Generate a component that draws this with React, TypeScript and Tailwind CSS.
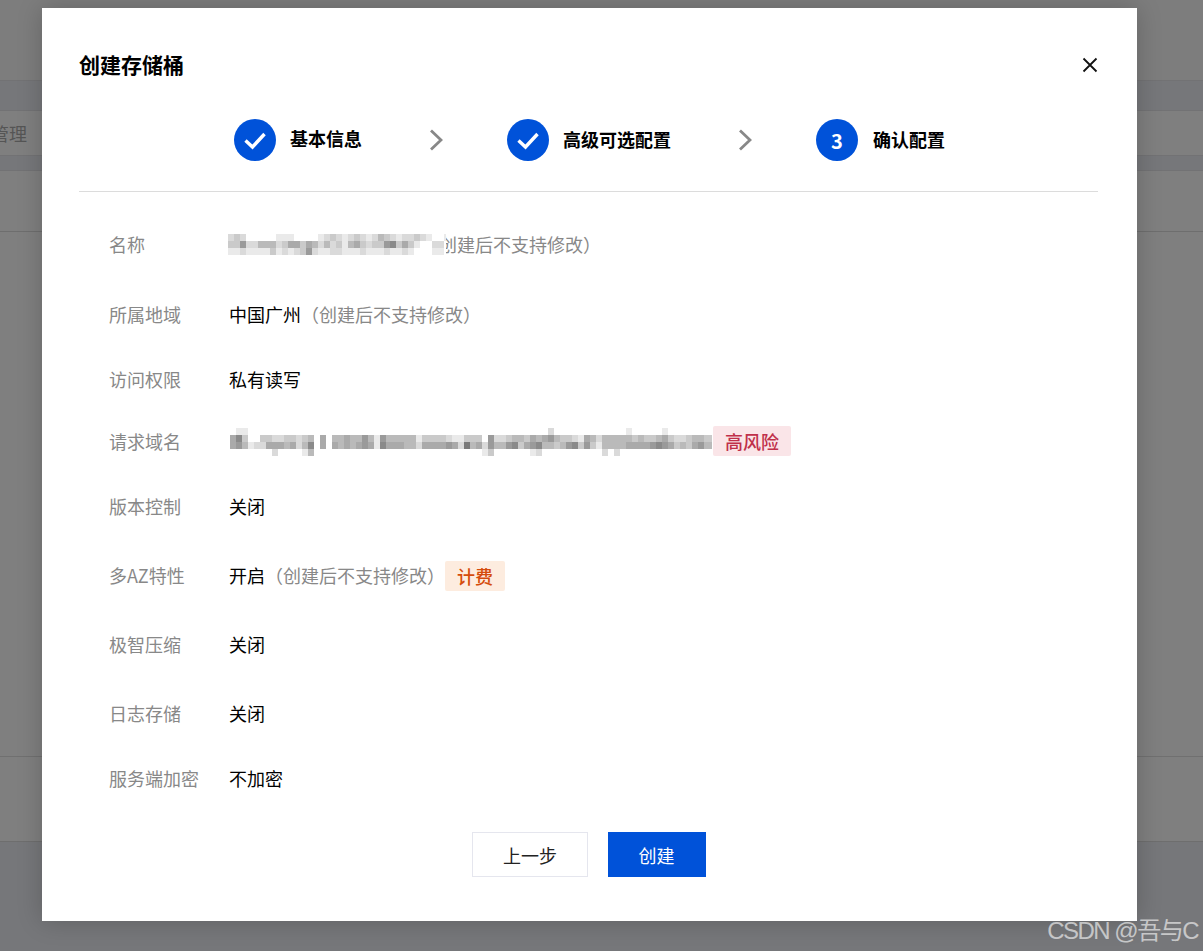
import React from "react";

const NAME_ROWS = [
  "232000001110000123212321243212232100110",
  "336224442355354242314532336735310022000",
  "112111131212362112211121112112100011000",
];

const DOMAIN_ROWS = [
  "011000000000000000000000000000000000000000000000000002000000000000100000100000000",
  "573003322332340504454464164444413333211333062234435456433215424444434334532234433",
  "564122555452470505454565175554425555652845264467356744346736314444555567653435644",
  "000000020000140000000000000000000000000000130000001200000000002020000000000000000",
];

function Mosaic({ rows, size, width, height }: { rows: string[]; size: number; width: number; height: number }) {
  const rowH = height / rows.length;
  return (
    <svg width={width} height={height} className="relative z-10 block shrink-0 bg-white">
      <g style={{ filter: "blur(0.5px)" }}>
        {rows.map((row, r) =>
          row.split("").map((c, i) => {
            const v = parseInt(c, 16);
            if (!v) return null;
            const g = 250 - v * 16;
            return <rect key={`${r}-${i}`} x={i * size} y={r * rowH} width={size} height={rowH} fill={`rgb(${g},${g},${g})`} />;
          })
        )}
      </g>
    </svg>
  );
}

function Check() {
  return (
    <span className="flex h-[42px] w-[42px] items-center justify-center rounded-full bg-[#0052d9]">
      <svg width="24" height="24" viewBox="0 0 24 24" fill="none" stroke="#fff" strokeWidth="3.4">
        <path d="M2.5 12.5 L9.5 19 L21.5 6" />
      </svg>
    </span>
  );
}

function Chevron() {
  return (
    <svg width="14" height="22" viewBox="0 0 14 22" fill="none" stroke="#888" strokeWidth="2.8" className="shrink-0">
      <path d="M2 1.5 L12 11 L2 20.5" />
    </svg>
  );
}

function Row({ label, className, children }: { label: string; className: string; children: React.ReactNode }) {
  return (
    <div className={`flex h-[30px] items-center ${className}`}>
      <div className="w-[120px] shrink-0 text-[#888]">{label}</div>
      <div className="flex items-center text-black">{children}</div>
    </div>
  );
}

const Hint = () => <span className="text-[#888]">（创建后不支持修改）</span>;

export default function App() {
  return (
    <div
      className="relative flex h-[951px] w-[1203px] flex-col overflow-hidden bg-[#7f7f7f] text-[18px]"
      style={{ fontFamily: '"Noto Sans CJK SC", sans-serif' }}
    >
      <div className="h-[80px] shrink-0 bg-[#7d7d7d]" />
      <div className="h-[31px] shrink-0 border-y border-[#727274] bg-[#76777a]" />
      <div className="flex h-[44px] shrink-0 items-center text-[18px] text-[#555]">
        <span className="ml-[-9px]">管理</span>
      </div>
      <div className="h-[16px] shrink-0 border-y border-[#727274] bg-[#76777a]" />
      <div className="h-[61px] shrink-0 border-b border-[#6e6e6e]" />
      <div className="h-[525px] shrink-0 border-b border-[#707070]" />
      <div className="h-[85px] shrink-0 border-b border-[#6e6e6e]" />
      <div className="flex-1 bg-[#76777a]" />

      <div className="absolute left-[42px] top-[8px] flex h-[913px] w-[1095px] flex-col bg-white pl-[37px] pr-[39px] shadow-[0_0_24px_rgba(0,0,0,0.2)]">
        <div className="flex h-[111px] shrink-0 items-center justify-between pt-[3px]">
          <span className="mb-[2px] text-[21px] font-bold leading-none text-black">创建存储桶</span>
          <svg width="16" height="16" viewBox="0 0 16 16" fill="none" stroke="#111" strokeWidth="1.8">
            <path d="M1.5 1.5 L14.5 14.5 M14.5 1.5 L1.5 14.5" />
          </svg>
        </div>

        <div className="flex h-[73px] shrink-0 items-start border-b border-[#dcdcdc] pl-[155px] font-bold">
          <div className="flex h-[42px] items-center">
            <Check />
            <span className="mb-[3px] ml-[14px] text-black">基本信息</span>
            <span className="ml-[67px] mr-[64px]"><Chevron /></span>
            <Check />
            <span className="mb-[2px] ml-[14px] text-black">高级可选配置</span>
            <span className="ml-[67px] mr-[64px]"><Chevron /></span>
            <span className="flex h-[42px] w-[42px] items-center justify-center rounded-full bg-[#0052d9] pt-[2px] text-[20px] text-white">3</span>
            <span className="mb-[2px] ml-[15px] text-black">确认配置</span>
          </div>
        </div>

        <div className="flex flex-col pl-[30px]">
          <Row label="名称" className="mt-[37px]">
            <span className="ml-[-1px] flex items-center">
              <Mosaic rows={NAME_ROWS} size={6} width={218} height={21} />
              <span className="relative z-0 ml-[-7px] text-[#888]">创建后不支持修改）</span>
            </span>
          </Row>
          <Row label="所属地域" className="mt-[40px]">
            中国广州<Hint />
          </Row>
          <Row label="访问权限" className="mt-[35px]">
            私有读写
          </Row>
          <Row label="请求域名" className="mt-[32px]">
            <span className="ml-[1px] mt-[2px] block">
              <Mosaic rows={DOMAIN_ROWS} size={6} width={482} height={28} />
            </span>
            <span className="ml-[1px] flex h-[30px] w-[78px] items-center justify-center rounded-[2px] bg-[#fae5e8] font-medium text-[#c0304a]">高风险</span>
          </Row>
          <Row label="版本控制" className="mt-[35px]">
            关闭
          </Row>
          <Row label="多AZ特性" className="mt-[39px]">
            开启<Hint />
            <span className="mt-[2px] flex h-[30px] w-[60px] items-center justify-center rounded-[2px] bg-[#fdecdf] font-medium text-[#d54c0c]">计费</span>
          </Row>
          <Row label="极智压缩" className="mt-[39px]">
            关闭
          </Row>
          <Row label="日志存储" className="mt-[39px]">
            关闭
          </Row>
          <Row label="服务端加密" className="mt-[35px]">
            不加密
          </Row>
        </div>

        <div className="mt-[39px] flex justify-center gap-[20px]">
          <button className="flex h-[45px] w-[116px] items-center justify-center border border-[#e5e6ee] bg-white pl-[1px] pt-[2px] text-[#222]">上一步</button>
          <button className="flex h-[45px] w-[98px] items-center justify-center bg-[#0052d9] pt-[2px] text-white">创建</button>
        </div>
      </div>

      <div
        className="absolute bottom-[5px] right-[5px] text-[24px] leading-[30px] tracking-[-1.5px] text-white/60"
        style={{ fontFamily: '"Liberation Sans", "Noto Sans CJK SC", sans-serif' }}
      >
        CSDN @吾与C
      </div>
    </div>
  );
}
